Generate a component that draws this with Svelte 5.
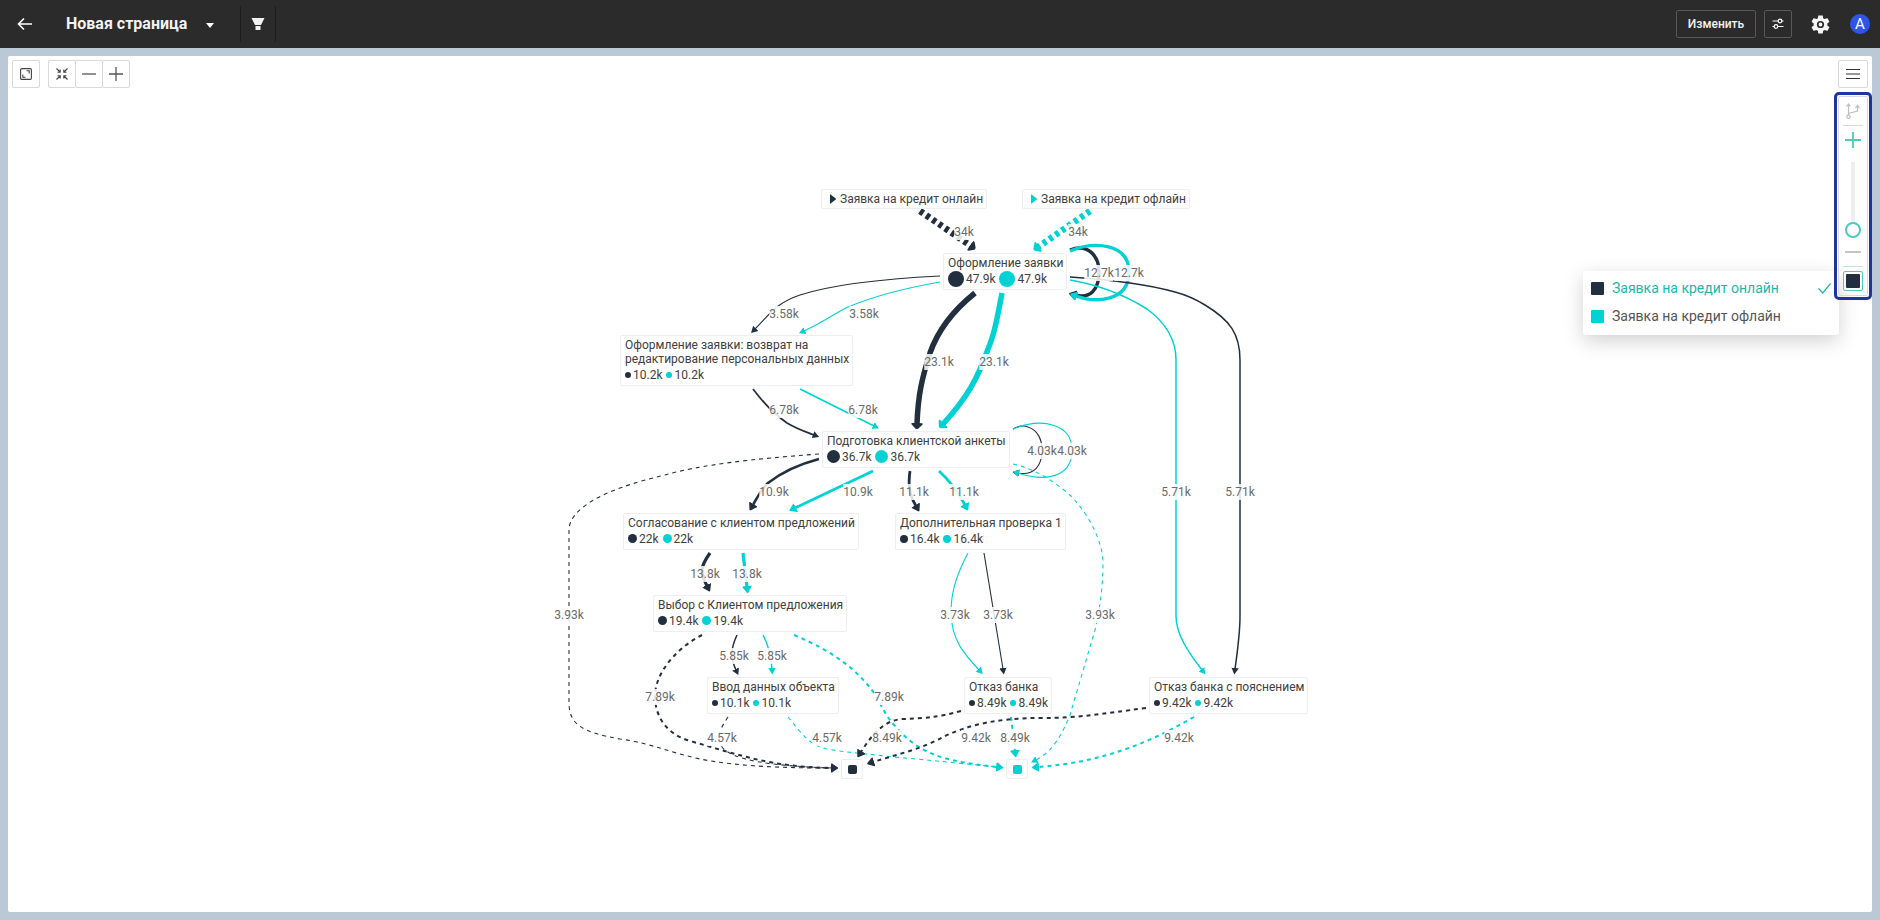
<script lang="ts">
    type Series = "online" | "offline";

    type GraphNode = {
        x: number;
        y: number;
        title: string;
        value: string;
        dot: number;
    };

    type Edge = {
        series: Series;
        d: string;
        width: number;
        dash?: string;
        label: string;
        x: number;
        y: number;
    };

    const seriesList: { id: Series; name: string }[] = [
        { id: "online", name: "Заявка на кредит онлайн" },
        { id: "offline", name: "Заявка на кредит офлайн" },
    ];

    const colours: Record<Series, string> = {
        online: "#222f3e",
        offline: "#00d2d3",
    };

    // top left corner of the graph in its own coordinate space
    const origin = { x: 540, y: 176 };
    const size = { width: 800, height: 616 };

    // arrow heads, picked by the width of the edge
    const heads = [
        { id: "thin", d: "M0 2.300 L6.500 6 L0 9.700 Z" },
        { id: "mid", d: "M0 1.500 H1 L7 5.500 V6.500 L1 10.500 H0 Z" },
        { id: "wide", d: "M0 .5 H1.500 L6 5 V7 L1.500 11.500 H0 Z" },
    ];

    function headFor(width: number) {
        if (width > 5) return "wide";
        return width >= 2 ? "mid" : "thin";
    }

    const starts: { x: number; y: number; series: Series; title: string }[] = [
        { x: 821, y: 189, series: "online", title: "Заявка на кредит онлайн" },
        { x: 1022, y: 189, series: "offline", title: "Заявка на кредит офлайн" },
    ];

    const ends: { x: number; y: number; series: Series }[] = [
        { x: 841, y: 759, series: "online" },
        { x: 1006, y: 759, series: "offline" },
    ];

    const nodes: GraphNode[] = [
        { x: 943, y: 253, title: "Оформление заявки", value: "47.9k", dot: 16 },
        {
            x: 620,
            y: 335,
            title: "Оформление заявки: возврат на\nредактирование персональных данных",
            value: "10.2k",
            dot: 6,
        },
        { x: 822, y: 431, title: "Подготовка клиентской анкеты", value: "36.7k", dot: 13 },
        { x: 623, y: 513, title: "Согласование с клиентом предложений", value: "22k", dot: 9 },
        { x: 895, y: 513, title: "Дополнительная проверка 1", value: "16.4k", dot: 8 },
        { x: 653, y: 595, title: "Выбор с Клиентом предложения", value: "19.4k", dot: 9 },
        { x: 707, y: 677, title: "Ввод данных объекта", value: "10.1k", dot: 6 },
        { x: 964, y: 677, title: "Отказ банка", value: "8.49k", dot: 6 },
        { x: 1149, y: 677, title: "Отказ банка с пояснением", value: "9.42k", dot: 6 },
    ];

    const edges: Edge[] = [
        { series: "online", width: 6.5, dash: "4 3.6", label: "34k", x: 964, y: 232, d: "M920 211 L971 246" },
        { series: "offline", width: 6.5, dash: "4 3.6", label: "34k", x: 1078, y: 232, d: "M1090 211 L1038 247" },
        { series: "online", width: 3.4, label: "12.7k", x: 1099, y: 273, d: "M1070 250 C1088 243 1099 256 1099 272 C1099 290 1090 299 1075 295" },
        { series: "offline", width: 3.4, label: "12.7k", x: 1129, y: 273, d: "M1070 251 C1094 241 1129 243 1129 272 C1129 302 1095 303 1076 296" },
        { series: "online", width: 1.1, label: "3.58k", x: 784, y: 314, d: "M940 276 C880 279 828 286 800 295 C776 303 770 314 755 329" },
        { series: "offline", width: 1.1, label: "3.58k", x: 864, y: 314, d: "M940 282 C900 289 872 297 848 307 C833 314 828 320 804 331" },
        { series: "online", width: 1.5, label: "5.71k", x: 1240, y: 492, d: "M1070 277 C1115 280 1150 285 1175 292 C1190 296 1197 300 1205 305 C1230 320 1240 334 1240 360 V616 C1240 632 1238 648 1235 669" },
        { series: "offline", width: 1.5, label: "5.71k", x: 1176, y: 492, d: "M1070 280 C1105 286 1128 297 1147 309 C1166 323 1176 340 1176 360 V616 C1176 634 1188 652 1202 670" },
        { series: "online", width: 5.5, label: "23.1k", x: 939, y: 362, d: "M975 293 C955 309 938 330 930 353 C922 378 918 395 917 424" },
        { series: "offline", width: 5.5, label: "23.1k", x: 994, y: 362, d: "M1002 293 C997 320 994 335 988 349 C978 378 967 398 943 424" },
        { series: "online", width: 1.7, label: "6.78k", x: 784, y: 410, d: "M753 389 C762 401 774 414 787 423 C797 429 806 432 814 435" },
        { series: "offline", width: 1.7, label: "6.78k", x: 863, y: 410, d: "M800 389 L846 412 L874 426" },
        { series: "online", width: 1.1, label: "4.03k", x: 1042, y: 451, d: "M1013 429 C1018 426 1023 425 1028 427 C1038 430 1042 440 1042 450 C1042 466 1034 476 1018 473" },
        { series: "offline", width: 1.1, label: "4.03k", x: 1072, y: 451, d: "M1013 429 C1042 417 1072 424 1072 450 C1072 478 1045 482 1018 473" },
        { series: "online", width: 1.1, dash: "4 4", label: "3.93k", x: 569, y: 615, d: "M819 454 C750 459 700 465 665 475 C600 490 569 510 569 530 V702 C569 725 582 732 620 739 C650 743 668 752 700 759 C740 767 790 768 832 768" },
        { series: "offline", width: 1.1, dash: "4 4", label: "3.93k", x: 1100, y: 615, d: "M1013 464 C1026 467 1037 472 1047 478 C1060 486 1072 496 1077 503 C1092 520 1103 545 1103 563 C1103 590 1099 612 1095 630 L1070 715 C1062 735 1052 752 1036 760" },
        { series: "online", width: 2.6, label: "10.9k", x: 774, y: 492, d: "M819 459 C800 464 782 472 768 483 C759 492 756 500 753 505" },
        { series: "offline", width: 2.6, label: "10.9k", x: 858, y: 492, d: "M873 471 L795 508" },
        { series: "online", width: 2.8, label: "11.1k", x: 914, y: 492, d: "M910 471 C908 485 909 494 916 506" },
        { series: "offline", width: 2.8, label: "11.1k", x: 964, y: 492, d: "M939 471 C949 480 958 492 965 505" },
        { series: "online", width: 3.2, label: "13.8k", x: 705, y: 574, d: "M710 553 C700 567 700 572 707 586" },
        { series: "offline", width: 3.2, label: "13.8k", x: 747, y: 574, d: "M743 553 L747 587" },
        { series: "online", width: 1.1, label: "3.73k", x: 998, y: 615, d: "M984 553 L1003 669" },
        { series: "offline", width: 1.1, label: "3.73k", x: 955, y: 615, d: "M968 553 C958 572 951 590 951 612 C951 640 965 655 979 670" },
        { series: "online", width: 2, dash: "4 4", label: "7.89k", x: 660, y: 697, d: "M702 635 C675 649 655 674 655 696 C655 716 666 734 690 741 C740 755 770 767 832 768" },
        { series: "offline", width: 2, dash: "4 4", label: "7.89k", x: 889, y: 697, d: "M794 635 C835 652 860 672 876 696 C882 706 885 716 897 728 C922 758 955 762 997 767" },
        { series: "online", width: 1.5, label: "5.85k", x: 734, y: 656, d: "M737 635 C731 648 730 657 736 670" },
        { series: "offline", width: 1.5, label: "5.85k", x: 772, y: 656, d: "M763 635 C769 646 771 655 772 669" },
        { series: "online", width: 1.1, dash: "4 4", label: "4.57k", x: 722, y: 738, d: "M728 717 C718 732 717 737 722 747 C732 760 770 766 832 768" },
        { series: "offline", width: 1.1, dash: "4 4", label: "4.57k", x: 827, y: 738, d: "M788 717 C799 730 808 745 827 749 C850 753 870 754 893 757 C930 760 965 764 998 767" },
        { series: "online", width: 2, dash: "4 4", label: "8.49k", x: 887, y: 738, d: "M961 711 C938 717 930 718 903 719 C882 720 870 738 861 752" },
        { series: "offline", width: 2, dash: "4 4", label: "8.49k", x: 1015, y: 738, d: "M1011 717 L1015 751" },
        { series: "online", width: 2, dash: "4 4", label: "9.42k", x: 976, y: 738, d: "M1146 708 C1100 714 1080 718 1040 718 C1000 718 970 724 943 737 C922 749 895 755 873 762" },
        { series: "offline", width: 2, dash: "4 4", label: "9.42k", x: 1179, y: 738, d: "M1194 717 C1150 742 1105 762 1038 767" },
    ];

    let selected: Series = $state("online");
    let detail = $state(0);
</script>

<div class="shell">
    <header>
        <button class="bare back" aria-label="Назад">
            <svg width="16" height="14" viewBox="0 0 16 14">
                <path d="M15 7H2M7 1.5 1.5 7 7 12.5" fill="none" stroke="#fff" stroke-width="1.6" />
            </svg>
        </button>
        <h1>Новая страница</h1>
        <button class="bare caret" aria-label="Выбрать страницу">
            <svg width="8" height="5" viewBox="0 0 8 5"><path d="M0 0h8L4 5z" fill="#fff" /></svg>
        </button>
        <button class="bare filter" aria-label="Фильтр">
            <svg width="14" height="12" viewBox="0 0 14 12">
                <path d="M.5 0h13L10 7H4zM4.500 8h5v4h-5z" fill="#f2f2f2" />
            </svg>
        </button>
        <div class="actions">
            <button class="outlined edit">Изменить</button>
            <button class="outlined" aria-label="Параметры">
                <svg width="12" height="12" viewBox="0 0 12 12" fill="none" stroke="#fff" stroke-width="1.200">
                    <path d="M.5 3H6M10 3h1.500M.5 8.500H2M6 8.500h5.500" />
                    <circle cx="8" cy="3" r="1.800" />
                    <circle cx="4" cy="8.500" r="1.800" />
                </svg>
            </button>
            <button class="bare gear" aria-label="Настройки">
                <svg width="19" height="19" viewBox="2 2 20 20">
                    <path
                        fill="#f5f5f5"
                        d="M19.14 12.94c.04-.3.06-.61.06-.94 0-.32-.02-.64-.07-.94l2.030-1.580c.18-.14.23-.41.12-.61l-1.920-3.320c-.12-.22-.37-.29-.59-.22l-2.390.96c-.5-.38-1.030-.7-1.620-.94l-.36-2.540c-.04-.24-.24-.41-.48-.41h-3.840c-.24 0-.43.17-.47.41l-.36 2.540c-.59.24-1.130.57-1.620.94l-2.390-.96c-.22-.08-.47 0-.59.22L2.740 8.870c-.12.21-.08.47.12.61l2.030 1.580c-.05.3-.09.63-.09.94s.02.64.07.94l-2.030 1.580c-.18.14-.23.41-.12.61l1.920 3.320c.12.22.37.29.59.22l2.390-.96c.5.38 1.030.7 1.620.94l.36 2.540c.05.24.24.41.48.41h3.840c.24 0 .44-.17.47-.41l.36-2.540c.59-.24 1.130-.56 1.620-.94l2.390.96c.22.08.47 0 .59-.22l1.920-3.320c.12-.22.07-.47-.12-.61l-2.010-1.580z"
                    />
                    <circle cx="12" cy="12" r="2.900" fill="#f5f5f5" stroke="#2b2b2b" stroke-width="1.800" />
                </svg>
            </button>
            <button class="bare avatar">A</button>
        </div>
    </header>

    <main>
        <div class="canvas">
            <div class="graph" style="width: {size.width}px; height: {size.height}px">
                <svg
                    width={size.width}
                    height={size.height}
                    viewBox="{origin.x} {origin.y} {size.width} {size.height}"
                >
                    <defs>
                        {#each seriesList as s}
                            {#each heads as head}
                                <marker
                                    id="head-{head.id}-{s.id}"
                                    markerUnits="userSpaceOnUse"
                                    markerWidth="8"
                                    markerHeight="12"
                                    refX="1"
                                    refY="6"
                                    orient="auto"
                                >
                                    <path d={head.d} fill={colours[s.id]} />
                                </marker>
                            {/each}
                        {/each}
                    </defs>
                    {#each edges as edge}
                        <path
                            d={edge.d}
                            fill="none"
                            stroke={colours[edge.series]}
                            stroke-width={edge.width}
                            stroke-dasharray={edge.dash}
                            marker-end="url(#head-{headFor(edge.width)}-{edge.series})"
                        />
                    {/each}
                </svg>

                {#each edges as edge}
                    <span class="edge-label" style="left: {edge.x - origin.x}px; top: {edge.y - origin.y}px">
                        {edge.label}
                    </span>
                {/each}

                {#each starts as start}
                    <div class="node start" style="left: {start.x - origin.x}px; top: {start.y - origin.y}px">
                        <svg width="6" height="10" viewBox="0 0 6 10">
                            <path
                                d="M0 0.500 Q0 0 .6 .4 L5.700 4.500 Q6 5 5.700 5.500 L.6 9.600 Q0 10 0 9.500 Z"
                                fill={colours[start.series]}
                            />
                        </svg>
                        {start.title}
                    </div>
                {/each}

                {#each nodes as node}
                    <div class="node" style="left: {node.x - origin.x}px; top: {node.y - origin.y}px">
                        <div class="node-title">{node.title}</div>
                        <div class="node-values">
                            {#each seriesList as s}
                                <span class="node-value">
                                    <i
                                        class={["dot", s.id]}
                                        style="width: {node.dot}px; height: {node.dot}px"
                                    ></i>
                                    {node.value}
                                </span>
                            {/each}
                        </div>
                    </div>
                {/each}

                {#each ends as end}
                    <div class="node end" style="left: {end.x - origin.x}px; top: {end.y - origin.y}px">
                        <i class={["stop", end.series]}></i>
                    </div>
                {/each}
            </div>

            <div class="toolbar">
                <div class="left-tools">
                    <button class="tool" aria-label="На весь экран">
                        <svg width="12" height="12" viewBox="0 0 12 12" fill="none" stroke="#444" stroke-width="1.100">
                            <rect x=".6" y=".6" width="10.800" height="10.800" rx="1.200" />
                            <path d="M6.500 2.800H9.200V5.500M5.500 9.200H2.800V6.500" />
                        </svg>
                    </button>
                    <div class="tool-group">
                        <button class="tool" aria-label="Вписать">
                            <svg width="12" height="12" viewBox="0 0 12 12" fill="none" stroke="#444" stroke-width="1.100">
                                <path d="M.5 .5 4 4M4.200 1.500V4.200H1.500M11.500 .5 8 4M7.800 1.500V4.200H10.500M.5 11.500 4 8M4.200 10.500V7.800H1.500M11.500 11.500 8 8M7.800 10.500V7.800H10.500" />
                            </svg>
                        </button>
                        <button class="tool" aria-label="Уменьшить">
                            <svg width="14" height="14" viewBox="0 0 14 14"><path d="M0 7h14" stroke="#555" stroke-width="1.300" /></svg>
                        </button>
                        <button class="tool" aria-label="Увеличить">
                            <svg width="14" height="14" viewBox="0 0 14 14"><path d="M0 7h14M7 0v14" stroke="#555" stroke-width="1.300" /></svg>
                        </button>
                    </div>
                </div>

                <div class="right-tools">
                    <button class="tool menu-button" aria-label="Меню">
                        <svg width="14" height="12" viewBox="0 0 14 12"><path d="M0 1.500h14M0 6h14M0 10.500h14" stroke="#333" stroke-width="1.100" /></svg>
                    </button>
                    <div class="detail-frame">
                        <div class="detail">
                            <button class="bare branch" aria-label="Ветвление">
                                <svg width="14" height="16" viewBox="0 0 14 16" fill="none" stroke="#bdbdbd" stroke-width="1.200">
                                    <path d="M2.500 12V1M.5 3.500 2.500 1 4.500 3.500M2.500 10.500 11.500 8V3M9.500 5 11.500 2.500 13.500 5" />
                                    <circle cx="2.500" cy="13.700" r="1.700" />
                                </svg>
                            </button>
                            <hr />
                            <button class="bare plus" aria-label="Больше связей">
                                <svg width="16" height="16" viewBox="0 0 16 16"><path d="M0 8h16M8 0v16" stroke="#4ecac2" stroke-width="1.800" /></svg>
                            </button>
                            <input type="range" min="0" max="100" bind:value={detail} aria-label="Детализация" />
                            <button class="bare minus" aria-label="Меньше связей">
                                <svg width="16" height="2" viewBox="0 0 16 2"><path d="M0 1h16" stroke="#bfbfbf" stroke-width="1.800" /></svg>
                            </button>
                            <hr />
                            <button class="bare swatch-button" aria-label="Цвет серии">
                                <i class={["swatch", selected]}></i>
                            </button>
                        </div>
                        <div class="popup" role="listbox" aria-label="Серия">
                            {#each seriesList as s}
                                <button
                                    class="bare option"
                                    class:active={selected === s.id}
                                    role="option"
                                    aria-selected={selected === s.id}
                                    onclick={() => (selected = s.id)}
                                >
                                    <i class={["swatch", s.id]}></i>
                                    <span>{s.name}</span>
                                    {#if selected === s.id}
                                        <svg width="13" height="11" viewBox="0 0 13 11">
                                            <path d="M.5 5.500 4.800 10 12.500 .5" fill="none" stroke="#1fb5ad" stroke-width="1.200" />
                                        </svg>
                                    {/if}
                                </button>
                            {/each}
                        </div>
                    </div>
                </div>
            </div>
        </div>
    </main>
</div>

<style>
    :global(body) {
        margin: 0;
        font-family: Roboto, sans-serif;
    }

    .shell {
        display: flex;
        flex-direction: column;
        min-height: 100vh;
    }

    button {
        display: flex;
        align-items: center;
        justify-content: center;
        box-sizing: border-box;
        margin: 0;
        padding: 0;
        font-family: inherit;
        cursor: pointer;
    }

    svg {
        display: block;
        flex: none;
    }

    .bare {
        border: none;
        background: none;
    }

    header {
        display: flex;
        align-items: center;
        height: 48px;
        background: #2b2b2b;
        color: #fff;
    }

    .back {
        width: 50px;
        height: 48px;
    }

    h1 {
        margin: 0 0 0 16px;
        color: #f2f2f2;
        font-size: 16px;
        font-weight: 700;
        line-height: 24px;
    }

    .caret {
        width: 24px;
        height: 24px;
        margin: 2px 18px 0 11px;
    }

    .filter {
        width: 36px;
        height: 36px;
        border-left: 1px solid #1c1c1c;
        border-right: 1px solid #1c1c1c;
    }

    .actions {
        display: flex;
        align-items: center;
        gap: 8px;
        margin-left: auto;
        padding-right: 10px;
    }

    .outlined {
        width: 28px;
        height: 28px;
        border: 1px solid #595959;
        border-radius: 2px;
        background: none;
        color: #f2f2f2;
    }

    .edit {
        width: 80px;
        font-size: 12px;
        font-weight: 500;
    }

    .gear {
        width: 40px;
        height: 28px;
    }

    .avatar {
        width: 20px;
        height: 20px;
        margin-left: 2px;
        border-radius: 50%;
        background: #2f54eb;
        color: #fff;
        font-size: 15px;
    }

    main {
        display: grid;
        flex: 1;
        padding: 8px;
        background: #bbc8d5;
    }

    .canvas {
        display: grid;
        border-radius: 2px;
        background: #fff;
    }

    .canvas > * {
        grid-area: 1 / 1;
    }

    .graph {
        position: relative;
        place-self: center;
        color: #404040;
        font-size: 12px;
        line-height: 14px;
    }

    .edge-label {
        position: absolute;
        translate: -50% -50%;
        background: rgba(255, 255, 255, 0.85);
        color: #6a6a6a;
        line-height: 16px;
    }

    .node {
        position: absolute;
        box-sizing: border-box;
        padding: 2px 3px 2px 4px;
        border: 1px solid #eee;
        border-radius: 2px;
        background: #fff;
        white-space: nowrap;
    }

    .node-title {
        white-space: pre;
    }

    .start {
        display: flex;
        align-items: center;
        gap: 4px;
        height: 20px;
        padding-left: 8px;
    }

    .end {
        display: flex;
        align-items: center;
        justify-content: center;
        width: 22px;
        height: 20px;
        padding: 0;
    }

    .stop {
        width: 9px;
        height: 9px;
        border-radius: 2px;
    }

    .node-values {
        display: flex;
        gap: 4px;
        height: 17px;
    }

    .node-value {
        display: flex;
        align-items: center;
        gap: 2px;
    }

    .dot {
        border-radius: 50%;
    }

    .online {
        background: #222f3e;
    }

    .offline {
        background: #00d2d3;
    }

    .toolbar {
        display: flex;
        align-items: flex-start;
        justify-content: space-between;
        padding: 4px 0 0 4px;
        isolation: isolate;
        pointer-events: none;
    }

    .toolbar > * {
        pointer-events: auto;
    }

    .left-tools {
        display: flex;
        gap: 8px;
    }

    .tool {
        width: 28px;
        height: 28px;
        border: 1px solid #d9d9d9;
        border-radius: 2px;
        background: #fff;
    }

    .tool-group {
        display: flex;
    }

    .tool-group .tool + .tool {
        margin-left: -1px;
    }

    .right-tools {
        display: flex;
        flex-direction: column;
        align-items: center;
        gap: 4px;
        isolation: isolate;
    }

    .menu-button {
        width: 30px;
    }

    .detail-frame {
        position: relative;
        padding: 1px;
        border: 3px solid #1e34a0;
        border-radius: 5px;
    }

    .detail {
        display: flex;
        flex-direction: column;
        align-items: center;
        box-sizing: border-box;
        width: 30px;
        height: 200px;
        border: 1px solid #d9d9d9;
        border-radius: 2px;
    }

    .branch {
        width: 28px;
        height: 28px;
    }

    hr {
        width: 20px;
        height: 1px;
        margin: 0;
        border: none;
        background: #d9d9d9;
    }

    .plus {
        width: 28px;
        height: 28px;
    }

    input[type="range"] {
        width: 16px;
        height: 76px;
        margin: 8px 0 0;
        appearance: none;
        background: linear-gradient(#eee, #eee) center / 4px 100% no-repeat;
        direction: rtl;
        writing-mode: vertical-lr;
    }

    input[type="range"]::-webkit-slider-thumb {
        box-sizing: border-box;
        width: 16px;
        height: 16px;
        appearance: none;
        border: 2px solid #4ecac2;
        border-radius: 50%;
        background: #fff;
    }

    .minus {
        width: 28px;
        height: 28px;
    }

    .swatch-button {
        width: 20px;
        height: 20px;
        margin-top: 4px;
        border: 1px solid #4ecac2;
        border-radius: 2px;
    }

    .swatch {
        width: 13px;
        height: 13px;
        border-radius: 1px;
    }

    .swatch-button .swatch {
        width: 14px;
        height: 14px;
    }

    .popup {
        position: absolute;
        top: 176px;
        right: 30px;
        z-index: -1;
        box-sizing: border-box;
        width: 256px;
        padding: 3px 0 5px;
        border-radius: 2px;
        background: #fff;
        box-shadow: 0 6px 20px rgba(0, 0, 0, 0.18);
    }

    .option {
        gap: 8px;
        justify-content: flex-start;
        width: 100%;
        height: 28px;
        padding: 0 8px;
        color: #555;
        font-size: 14px;
        line-height: 20px;
    }

    .option.active {
        color: #1fb5ad;
    }

    .option svg {
        margin-left: auto;
    }
</style>
